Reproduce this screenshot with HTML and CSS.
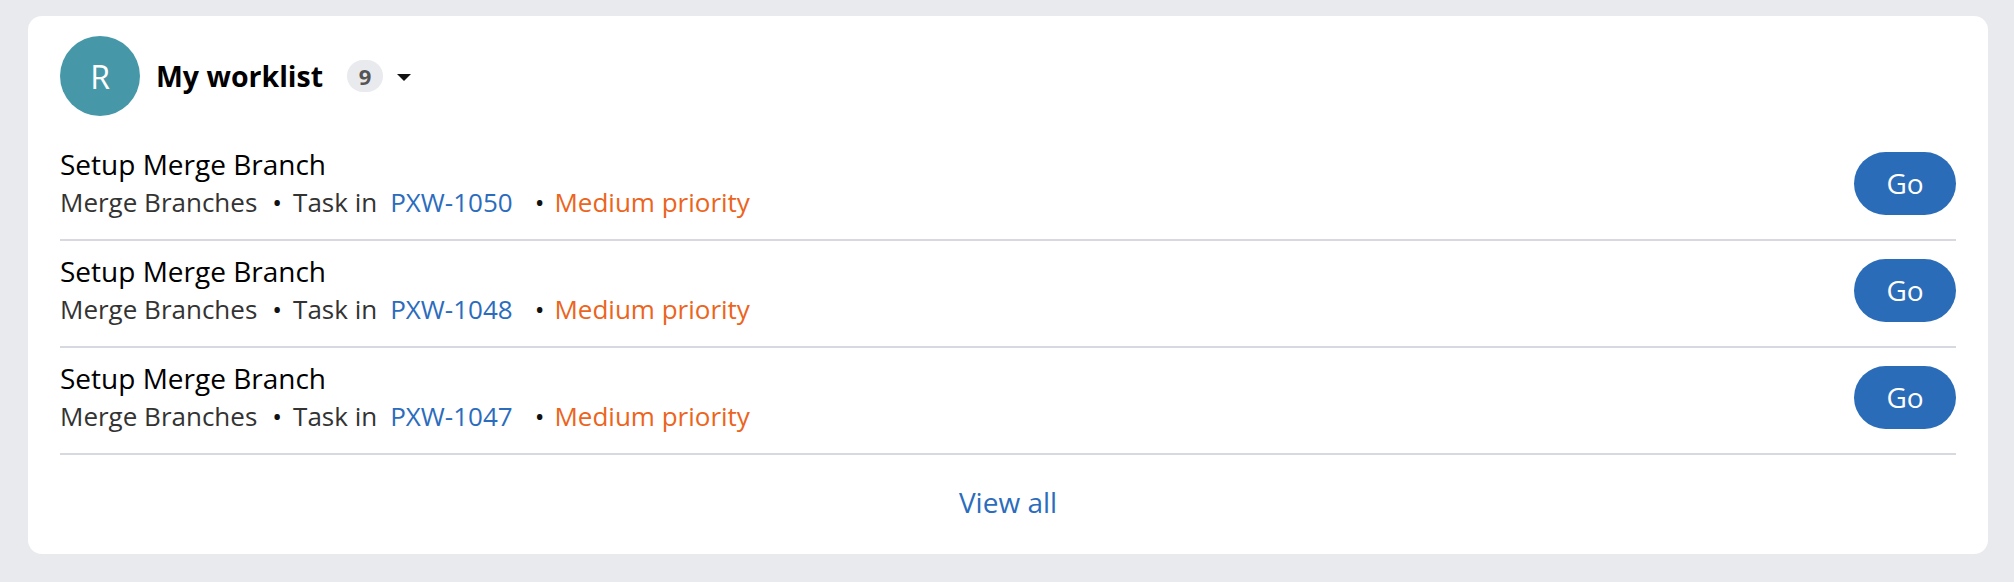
FILE: index.html
```html
<!DOCTYPE html>
<html lang="en">
<head>
<meta charset="utf-8">
<title>My worklist</title>
<link rel="stylesheet" href="styles.css">
</head>
<body>
<div class="card">
  <div class="header">
    <div class="avatar">R</div>
    <h2 class="title">My worklist</h2>
    <span class="badge">9</span>
    <span class="caret"></span>
  </div>
  <ul class="list">
    <li class="row">
      <div class="info">
        <div class="row-title">Setup Merge Branch</div>
        <div class="meta">
          <span>Merge Branches</span><span class="dot">•</span><span>Task in</span><a class="link" href="#">PXW-1050</a><span class="dot dot-wide">•</span><span class="priority">Medium priority</span>
        </div>
      </div>
      <button class="go">Go</button>
    </li>
    <li class="row">
      <div class="info">
        <div class="row-title">Setup Merge Branch</div>
        <div class="meta">
          <span>Merge Branches</span><span class="dot">•</span><span>Task in</span><a class="link" href="#">PXW-1048</a><span class="dot dot-wide">•</span><span class="priority">Medium priority</span>
        </div>
      </div>
      <button class="go">Go</button>
    </li>
    <li class="row">
      <div class="info">
        <div class="row-title">Setup Merge Branch</div>
        <div class="meta">
          <span>Merge Branches</span><span class="dot">•</span><span>Task in</span><a class="link" href="#">PXW-1047</a><span class="dot dot-wide">•</span><span class="priority">Medium priority</span>
        </div>
      </div>
      <button class="go">Go</button>
    </li>
  </ul>
  <div class="footer"><a class="view-all" href="#">View all</a></div>
</div>
</body>
</html>
```

FILE: styles.css
```css
* { box-sizing: border-box; }
html, body { margin: 0; padding: 0; }
body {
  background: #e9eaee;
  font-family: "Open Sans", "Noto Sans", sans-serif;
  padding: 16px 26px 28px 28px;
  color: #000;
}
.card {
  background: #fff;
  border-radius: 14px;
  padding: 20px 32px 0 32px;
}
.header {
  display: flex;
  align-items: center;
  height: 80px;
}
.avatar {
  width: 80px;
  height: 80px;
  border-radius: 50%;
  background: #4698a9;
  color: #fff;
  font-size: 32px;
  display: flex;
  align-items: center;
  justify-content: center;
  margin-right: 16px;
}
.title {
  margin: 0 24px 0 0;
  font-size: 28.5px;
  font-weight: 700;
  line-height: 40px;
  color: #000;
}
.badge {
  width: 36px;
  height: 32px;
  border-radius: 16px;
  background: #e9eaee;
  color: #555;
  font-size: 22px;
  font-weight: 700;
  line-height: 32px;
  display: flex;
  align-items: center;
  justify-content: center;
  margin-right: 14px;
}
.caret {
  width: 0;
  height: 0;
  border-left: 7.5px solid transparent;
  border-right: 7.5px solid transparent;
  border-top: 7.5px solid #111;
  margin-top: 2px;
}
.list {
  list-style: none;
  margin: 18px 0 0 0;
  padding: 0;
}
.row {
  display: flex;
  align-items: center;
  justify-content: space-between;
  padding: 11px 0 18px 0;
  border-bottom: 2px solid #d6d9df;
}
.row-title {
  font-size: 28px;
  line-height: 38px;
  color: #000;
}
.meta {
  display: flex;
  align-items: baseline;
  font-size: 26px;
  line-height: 38px;
  color: #333;
}
.dot {
  color: #111;
  margin: 0 11px 0 15px;
}
.dot-wide { margin-left: 22px; margin-right: 10px; }
.link {
  color: #2b6cbd;
  text-decoration: none;
  margin-left: 13px;
}
.priority { color: #eb6420; }
.go {
  width: 102px;
  height: 63px;
  border: 0;
  border-radius: 32px;
  background: #2b6cb8;
  color: #fff;
  font-family: "Open Sans", "Noto Sans", sans-serif;
  font-size: 28px;
  padding: 0;
  cursor: pointer;
}
.footer {
  text-align: center;
  padding: 27px 0 32px 0;
}
.view-all {
  font-size: 28px;
  line-height: 40px;
  color: #2b6cbd;
  text-decoration: none;
}
```
